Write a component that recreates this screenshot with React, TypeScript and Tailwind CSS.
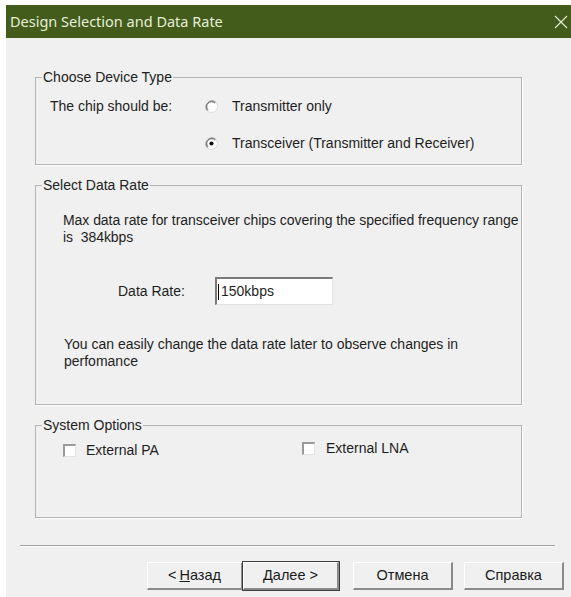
import React from 'react';

const body = { fontFamily: '"Liberation Sans", Arial, sans-serif' };

function Radio({ checked }: { checked?: boolean }) {
  return (
    <svg width="13" height="13" viewBox="0 0 13 13" className="shrink-0">
      <circle cx="6.5" cy="6.5" r="6" fill="#fff" stroke="#dcdcdc" />
      <path d="M2.3 10.7 A6 6 0 0 1 10.7 2.3" fill="none" stroke="#8c8c8c" />
      <path d="M3.1 9.9 A4.8 4.8 0 0 1 9.9 3.1" fill="none" stroke="#5a5a5a" />
      {checked && <circle cx="6.5" cy="6.5" r="2.1" fill="#111" />}
    </svg>
  );
}

function Check() {
  return (
    <span className="block w-[13px] h-[13px] shrink-0 bg-white border-t-2 border-l-2 border-t-[#9a9a9a] border-l-[#9a9a9a] border-r border-b border-r-[#e3e3e3] border-b-[#e3e3e3]" />
  );
}

function Group({ title, className, children }: { title: string; className?: string; children: React.ReactNode }) {
  return (
    <fieldset className={`ml-[29px] w-[487px] border border-[#b4b4b4] shadow-[1px_1px_0_#fff] ${className ?? ''}`}>
      <legend className="ml-[6px] px-[1px] text-[14px] leading-[15px] text-[#222]">{title}</legend>
      {children}
    </fieldset>
  );
}

function WinButton({ children, primary }: { children: React.ReactNode; primary?: boolean }) {
  return (
    <div
      className={`h-[28px] flex items-center justify-center text-[14.5px] text-[#1a1a1a] bg-[#f0f0f0] border-t border-l border-t-white border-l-white border-r-2 border-b-2 border-r-[#8a8a8a] border-b-[#8a8a8a] ${
        primary ? 'outline outline-1 outline-[#3c3c3c]' : ''
      }`}
    >
      {children}
    </div>
  );
}

export default function App() {
  return (
    <div className="w-[571px] h-[597px] bg-white pl-[6px] pt-[5px] overflow-hidden" style={body}>
      <div className="h-full bg-[#f0f0f0] flex flex-col">
        {/* Title bar */}
        <div className="h-[33px] shrink-0 bg-[#435c1c] flex items-center justify-between pl-[4px] pr-[3px]">
          <span className="text-[14.5px] text-[#e6efd8]" style={{ fontFamily: '"Noto Sans", "Open Sans", sans-serif' }}>
            Design Selection and Data Rate
          </span>
          <svg width="14" height="14" viewBox="0 0 14 14">
            <path d="M1 1 L13 13 M13 1 L1 13" stroke="#e6efd8" strokeWidth="1.1" />
          </svg>
        </div>

        <div className="flex-1 flex flex-col pt-[32px] text-[14px] text-[#1e1e1e]">
          <Group title="Choose Device Type">
            <div className="pl-[14px] pt-[13px] pb-[12px] flex flex-col gap-[20px]">
              <div className="flex items-center h-[17px]">
                <span className="w-[155px]">The chip should be:</span>
                <Radio />
                <span className="ml-[14px]">Transmitter only</span>
              </div>
              <div className="flex items-center h-[17px]">
                <span className="w-[155px]" />
                <Radio checked />
                <span className="ml-[14px]">Transceiver (Transmitter and Receiver)</span>
              </div>
            </div>
          </Group>

          <Group title="Select Data Rate" className="mt-[13px]">
            <div className="pl-[27px] pt-[19px] pb-[34px]">
              <p className="leading-[17px] whitespace-nowrap tracking-[-0.05px]">
                Max data rate for transceiver chips covering the specified frequency range
                <br />
                is&nbsp; 384kbps
              </p>
              <div className="flex items-center mt-[31px] pl-[55px]">
                <span className="w-[97px]">Data Rate:</span>
                <div className="w-[118px] h-[28px] bg-white border-t-2 border-l-2 border-t-[#7a7a7a] border-l-[#7a7a7a] border-r border-b border-r-[#e3e3e3] border-b-[#e3e3e3] flex items-center pl-[1px]">
                  <span className="w-px h-[16px] bg-black mr-[2px]" />
                  <span>150kbps</span>
                </div>
              </div>
              <p className="leading-[17px] mt-[31px] pl-[1px] whitespace-nowrap">
                You can easily change the data rate later to observe changes in
                <br />
                perfomance
              </p>
            </div>
          </Group>

          <Group title="System Options" className="mt-[13px]">
            <div className="pl-[27px] pt-[9px] pb-[58px] flex items-start">
              <div className="flex items-center w-[239px] h-[17px]">
                <Check />
                <span className="ml-[10px]">External PA</span>
              </div>
              <div className="flex items-center h-[17px] -mt-[2px]">
                <Check />
                <span className="ml-[11px]">External LNA</span>
              </div>
            </div>
          </Group>

          {/* Wizard buttons */}
          <div className="mt-[27px] ml-[14px] w-[535px] border-t border-t-[#a0a0a0] shadow-[0_1px_0_#fff]" />
          <div className="flex mt-[16px] ml-[141px]">
            <div className="w-[96px]">
              <WinButton>
                &lt; <span className="underline ml-[3px]">Н</span>азад
              </WinButton>
            </div>
            <div className="w-[96px]">
              <WinButton primary>
                <span className="underline">Д</span>алее &gt;
              </WinButton>
            </div>
            <div className="w-[100px] ml-[14px]">
              <WinButton>Отмена</WinButton>
            </div>
            <div className="w-[100px] ml-[11px]">
              <WinButton>Справка</WinButton>
            </div>
          </div>
        </div>
      </div>
    </div>
  );
}
